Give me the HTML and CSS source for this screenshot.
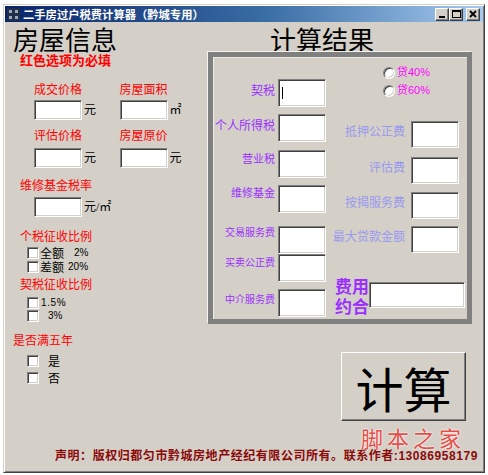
FILE: index.html
```html
<!DOCTYPE html>
<html lang="zh-CN">
<head>
<meta charset="utf-8">
<title>二手房过户税费计算器</title>
<link rel="stylesheet" href="styles.css">
</head>
<body>
<div class="window">
  <div class="titlebar">
    <svg class="app-icon" width="13" height="13" viewBox="0 0 13 13">
      <rect x="0" y="0" width="13" height="13" fill="#20304a"/>
      <rect x="2" y="2" width="3" height="3" fill="#9aa8b8"/>
      <rect x="8" y="2" width="3" height="3" fill="#9aa8b8"/>
      <rect x="2" y="8" width="3" height="3" fill="#9aa8b8"/>
      <rect x="8" y="8" width="3" height="3" fill="#9aa8b8"/>
    </svg>
    <span class="title">二手房过户税费计算器（黔城专用）</span>
    <div class="caption-btns">
      <span class="cbtn"><svg width="12" height="11" viewBox="0 0 12 11"><rect x="3" y="7" width="6" height="2" fill="#000"/></svg></span>
      <span class="cbtn"><svg width="12" height="11" viewBox="0 0 12 11"><rect x="2.5" y="1.5" width="8" height="7" fill="none" stroke="#000"/><rect x="2" y="1" width="9" height="2" fill="#000"/></svg></span>
      <span class="cbtn close"><svg width="12" height="11" viewBox="0 0 12 11"><path d="M3 2 L9 8 M9 2 L3 8" stroke="#000" stroke-width="1.8"/></svg></span>
    </div>
  </div>
  <div class="client">
    <div class="main">
      <div class="left">
        <h1 class="big-title t-left">房屋信息</h1>
        <div class="note">红色选项为必填</div>

        <div class="pair lbl-row1">
          <span class="req cell">成交价格</span><span class="req cell">房屋面积</span>
        </div>
        <div class="pair inp-row1">
          <span class="cell field"><span class="tb small"></span><span class="unit">元</span></span>
          <span class="cell field"><span class="tb small"></span><span class="unit">㎡</span></span>
        </div>

        <div class="pair lbl-row2">
          <span class="req cell">评估价格</span><span class="req cell">房屋原价</span>
        </div>
        <div class="pair inp-row2">
          <span class="cell field"><span class="tb small"></span><span class="unit">元</span></span>
          <span class="cell field"><span class="tb small"></span><span class="unit">元</span></span>
        </div>

        <div class="req section lbl-row3">维修基金税率</div>
        <div class="pair inp-row3">
          <span class="cell field"><span class="tb small"></span><span class="unit">元/㎡</span></span>
        </div>

        <div class="req section lbl-row4">个税征收比例</div>
        <div class="cb-row cb1"><span class="cb"></span><span class="cb-text">全额</span><span class="pct pct-a">2%</span></div>
        <div class="cb-row cb2"><span class="cb"></span><span class="cb-text">差额</span><span class="pct pct-b">20%</span></div>

        <div class="req section lbl-row5">契税征收比例</div>
        <div class="cb-row cb3 short"><span class="cb"></span><span class="pct pct-c">1.5%</span></div>
        <div class="cb-row cb4 short"><span class="cb"></span><span class="pct pct-d">3%</span></div>

        <div class="req section lbl-row6">是否满五年</div>
        <div class="cb-row cb5"><span class="cb"></span><span class="cb-text yn">是</span></div>
        <div class="cb-row cb6"><span class="cb"></span><span class="cb-text yn">否</span></div>
      </div>

      <div class="right">
        <h2 class="big-title t-right">计算结果</h2>
        <div class="group">
          <div class="col-a">
            <div class="frow fr1"><span class="plbl l12 p4">契税</span><span class="tb tall"><span class="caret"></span></span></div>
            <div class="frow fr2"><span class="plbl l12 p4">个人所得税</span><span class="tb tall"></span></div>
            <div class="frow fr3"><span class="plbl l11 p2">营业税</span><span class="tb tall"></span></div>
            <div class="frow fr4"><span class="plbl l11 p1">维修基金</span><span class="tb tall"></span></div>
            <div class="frow fr5"><span class="plbl l10 p0">交易服务费</span><span class="tb tall"></span></div>
            <div class="frow fr6"><span class="plbl l10 p2">买卖公正费</span><span class="tb tall"></span></div>
            <div class="frow fr7"><span class="plbl l10 p4">中介服务费</span><span class="tb tall"></span></div>
          </div>
          <div class="col-b">
            <div class="radio-row rr1"><span class="radio"></span><span class="rtext">贷40%</span></div>
            <div class="radio-row rr2"><span class="radio"></span><span class="rtext">贷60%</span></div>
            <div class="brow br1"><span class="blbl">抵押公正费</span><span class="tb tall"></span></div>
            <div class="brow br2"><span class="blbl">评估费</span><span class="tb tall"></span></div>
            <div class="brow br3"><span class="blbl">按揭服务费</span><span class="tb tall"></span></div>
            <div class="brow br4"><span class="blbl">最大贷款金额</span><span class="tb tall"></span></div>
            <div class="total-row"><span class="total-lbl">费用<br>约合</span><span class="tb total"></span></div>
          </div>
        </div>
        <div class="calc-btn">计算</div>
      </div>
    </div>
    <div class="footer">声明：版权归都匀市黔城房地产经纪有限公司所有。联系作者:13086958179</div>
  </div>
  <div class="watermark">脚本之家</div>
</div>
</body>
</html>
```

FILE: styles.css
```css
* { box-sizing: border-box; margin: 0; padding: 0; }

body {
  margin: 0;
  background: #ffffff;
  font-family: "Liberation Sans", "Noto Sans CJK SC", sans-serif;
  font-size: 12px;
  color: #000;
}

.window {
  position: relative;
  margin: 4px 0 0 3px;
  width: 482px;
  height: 469px;
  background: #d4d0c8;
  border: 1px solid;
  border-color: #d4d0c8 #404040 #404040 #d4d0c8;
  box-shadow: inset 1px 1px 0 #ffffff, inset -1px -1px 0 #808080;
  padding: 1px;
}

/* title bar */
.titlebar {
  height: 16px;
  display: flex;
  align-items: center;
  padding-left: 2px;
  padding-right: 3px;
  background: linear-gradient(to right, #0a246a, #3a6ea5 55%, #a6caf0);
}
.app-icon { display: block; flex: none; }
.title {
  margin-left: 3px;
  color: #fff;
  font-family: "Noto Sans CJK SC", sans-serif;
  font-weight: bold;
  font-size: 11.3px;
  line-height: 16px;
  white-space: nowrap;
}
.caption-btns { margin-left: auto; display: flex; align-items: center; }
.cbtn {
  width: 14px;
  height: 13px;
  display: flex;
  align-items: center;
  justify-content: center;
  background: #d4d0c8;
  border: 1px solid;
  border-color: #ffffff #404040 #404040 #ffffff;
  box-shadow: inset -1px -1px 0 #808080;
}
.cbtn svg { display: block; }
.cbtn.close { margin-left: 3px; }

/* client */
.client { display: flex; flex-direction: column; }
.main { display: flex; }
.left { width: 200px; display: flex; flex-direction: column; }
.right { width: 278px; display: flex; flex-direction: column; }

.big-title {
  font-family: "Noto Sans CJK SC", sans-serif;
  font-weight: normal;
  font-size: 26px;
  line-height: 25px;
  color: #000;
  white-space: nowrap;
}
.t-left { margin-top: 4px; margin-left: 8px; height: 25px; }
.t-right { margin-top: 4px; margin-left: 65px; height: 26px; }

.note {
  margin-top: 1px;
  margin-left: 15px;
  font-family: "Noto Sans CJK SC", sans-serif;
  font-weight: bold;
  font-size: 13px;
  line-height: 15px;
  color: #ff0000;
}

.req {
  font-family: "Noto Sans CJK SC", sans-serif;
  font-size: 12px;
  line-height: 14px;
  color: #ff0000;
  white-space: nowrap;
}

.pair { display: flex; margin-left: 29px; }
.cell { width: 90px; }
.field { display: flex; align-items: center; }
.unit {
  margin-left: 2px;
  font-family: "Liberation Serif", "Noto Sans CJK SC", serif;
  font-size: 12px;
  line-height: 14px;
}

.lbl-row1 { margin-top: 15px; }
.inp-row1 { margin-top: 4px; }
.lbl-row2 { margin-top: 8px; }
.inp-row2 { margin-top: 6px; }
.section { margin-left: 15px; }
.lbl-row3 { margin-top: 10px; }
.inp-row3 { margin-top: 5px; }
.lbl-row4 { margin-top: 12px; }
.lbl-row5 { margin-top: 3px; }
.lbl-row6 { margin-top: 11px; margin-left: 8px; }

/* inputs */
.tb {
  display: flex;
  align-items: center;
  flex: none;
  background: #fff;
  border: 1px solid;
  border-color: #808080 #ffffff #ffffff #808080;
  box-shadow: inset 1px 1px 0 #404040, inset -1px -1px 0 #d4d0c8;
}
.tb.small { width: 48px; height: 20px; }
.tb.tall { width: 48px; height: 28px; }
.tb.total { width: 96px; height: 26px; margin-top: 6px; }
.caret { display: block; width: 1px; height: 12px; margin-left: 3px; background: #000; }

/* checkboxes */
.cb-row {
  display: flex;
  align-items: center;
  height: 14px;
  margin-left: 22px;
}
.cb-row.short { height: 13px; }
.cb {
  width: 12px;
  height: 12px;
  flex: none;
  background: #fff;
  border: 1px solid;
  border-color: #808080 #ffffff #ffffff #808080;
  box-shadow: inset 1px 1px 0 #404040, inset -1px -1px 0 #d4d0c8;
}
.cb-text {
  margin-left: 1px;
  font-family: "Noto Sans CJK SC", sans-serif;
  font-size: 12px;
  line-height: 14px;
}
.cb-text.yn { margin-left: 9px; }
.pct {
  font-family: "Liberation Sans", sans-serif;
  font-size: 10px;
  line-height: 14px;
}
.pct-a { margin-left: 10px; }
.pct-b { margin-left: 4px; }
.pct-c { margin-left: 2px; letter-spacing: 0.6px; }
.pct-d { margin-left: 9px; }

.cb1 { margin-top: 3px; }
.cb2 { margin-top: 0; }
.cb3 { margin-top: 5px; }
.cb4 { margin-top: 0; }
.cb5 { margin-top: 7px; }
.cb6 { margin-top: 3px; }

/* result group */
.group {
  margin-left: 3px;
  width: 264px;
  height: 272px;
  display: flex;
  border: 5px solid #808080;
  box-shadow: -1px -1px 0 #f4f3f0, inset 1px 1px 0 #eeece6;
}
.col-a { width: 113px; display: flex; flex-direction: column; }
.col-b { width: 141px; display: flex; flex-direction: column; }

.frow { display: flex; align-items: flex-start; }
.plbl {
  width: 62px;
  margin-right: 3px;
  text-align: right;
  font-family: "Noto Sans CJK SC", sans-serif;
  color: #9b30ff;
  white-space: nowrap;
}
.l12 { font-size: 12px; line-height: 14px; }
.l11 { font-size: 11px; line-height: 13px; }
.l10 { font-size: 10px; line-height: 12px; }
.p0 { padding-top: 0; }
.p1 { padding-top: 1px; }
.p2 { padding-top: 2px; }
.p4 { padding-top: 4px; }

.fr1 { margin-top: 22px; }
.fr2 { margin-top: 7px; }
.fr3 { margin-top: 8px; }
.fr4 { margin-top: 7px; }
.fr5 { margin-top: 13px; }
.fr6 { margin-top: 0; }
.fr7 { margin-top: 7px; }

.radio-row { display: flex; align-items: center; height: 13px; margin-left: 57px; }
.rr1 { margin-top: 9px; }
.rr2 { margin-top: 5px; }
.radio {
  width: 12px;
  height: 12px;
  flex: none;
  border-radius: 50%;
  background: #fff;
  border: 1px solid;
  border-color: #808080 #ffffff #ffffff #808080;
  box-shadow: inset 1px 1px 0 #404040, inset -1px -1px 0 #d4d0c8;
}
.rtext {
  margin-left: 2px;
  font-family: "Liberation Sans", "Noto Sans CJK SC", sans-serif;
  font-size: 11px;
  line-height: 13px;
  color: #ff00ff;
}

.brow { display: flex; justify-content: flex-end; align-items: flex-start; padding-right: 8px; }
.blbl {
  padding-top: 3px;
  margin-right: 6px;
  font-family: "Noto Sans CJK SC", sans-serif;
  font-size: 12px;
  line-height: 14px;
  color: #9999ee;
  white-space: nowrap;
}
.brow .tb.tall { height: 27px; }
.br1 { margin-top: 24px; }
.br2 { margin-top: 9px; }
.br3 { margin-top: 8px; }
.br4 { margin-top: 7px; }

.total-row { display: flex; align-items: flex-start; margin-top: 23px; }
.total-lbl {
  margin-left: 9px;
  width: 34px;
  font-family: "Noto Sans CJK SC", sans-serif;
  font-weight: bold;
  font-size: 17px;
  line-height: 20px;
  color: #9b30ff;
}

/* calculate button */
.calc-btn {
  margin-top: 28px;
  margin-left: 136px;
  width: 125px;
  height: 69px;
  display: flex;
  align-items: center;
  justify-content: center;
  background: #d4d0c8;
  border: 1px solid;
  border-color: #ffffff #404040 #404040 #ffffff;
  box-shadow: inset -1px -1px 0 #808080;
  font-family: "Noto Sans CJK SC", sans-serif;
  font-size: 48px;
  line-height: 60px;
  color: #000;
}

/* footer */
.footer {
  margin-top: 28px;
  margin-left: 50px;
  font-family: "Liberation Sans", "Noto Sans CJK SC", sans-serif;
  font-weight: bold;
  font-size: 12px;
  line-height: 14px;
  letter-spacing: 0.55px;
  color: #8b0a0a;
  white-space: nowrap;
}

/* watermark overlay */
.watermark {
  position: absolute;
  left: 357px;
  top: 418px;
  font-family: "Noto Sans CJK SC", sans-serif;
  font-size: 22px;
  line-height: 28px;
  letter-spacing: 4px;
  color: #e8403a;
  text-shadow: 0 0 2px #fff, 0 0 2px #fff;
  opacity: 0.9;
}
```
